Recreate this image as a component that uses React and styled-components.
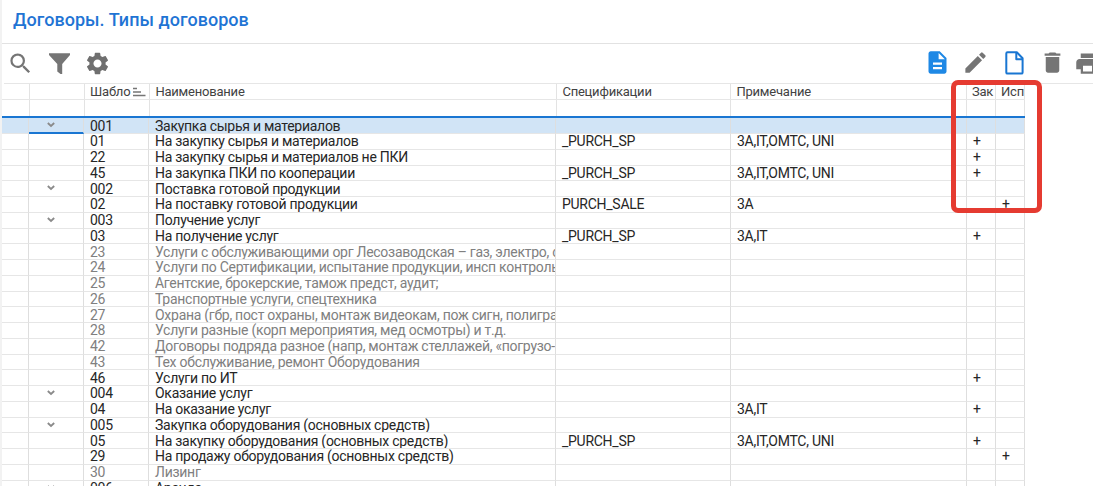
import React from "react";
import styled, { createGlobalStyle, css } from "styled-components";
import { MdSearch, MdSettings, MdEdit, MdDelete, MdPrint, MdDescription } from "react-icons/md";

const GlobalStyle = createGlobalStyle`
  * { box-sizing: border-box; }
  body { margin: 0; background: #fff; overflow: hidden; font-family: Roboto, "Liberation Sans", sans-serif; }
`;

const Page = styled.div`
  position: relative;
  width: 1093px;
  height: 486px;
  overflow: hidden;
  border-left: 2px solid #f2f2f2;
  background: #fff;
`;

const TitleBar = styled.header`
  height: 44px;
  padding: 9px 0 0 11px;
  border-bottom: 1px solid #e2e2e2;
`;

const Title = styled.h1`
  margin: 0;
  font-size: 18px;
  line-height: 22px;
  font-weight: 500;
  letter-spacing: 0.04px;
  color: #1f74d4;
  white-space: nowrap;
`;

const Toolbar = styled.div`
  display: flex;
  justify-content: space-between;
  height: 39px;
  padding: 5px 0 0 5px;
`;

const ToolGroup = styled.div`
  display: flex;
  flex: none;
  margin-right: ${(p) => p.$shift || 0}px;
`;

const Tool = styled.button`
  display: flex;
  flex: none;
  width: 27px;
  height: 27px;
  margin: ${(p) => p.$drop || 0}px ${(p) => p.$after || 0}px 0 0;
  padding: 0;
  border: 0;
  background: none;
  color: ${(p) => p.$color || "#757575"};
  svg { width: 27px; height: 27px; flex: none; }
`;

const Grid = styled.div`
  width: 1023px;
`;

const HeadRow = styled.div`
  display: flex;
  height: ${(p) => p.$h}px;
  border-bottom: ${(p) => (p.$accent ? "2px solid #1976d2" : "1px solid #e6e6e6")};
`;

const HeadTop = styled.div`
  width: 1089px;
  height: 1px;
  margin-left: 2px;
  background: #e6e6e6;
`;

const HeadCell = styled.div`
  flex: none;
  display: flex;
  width: ${(p) => p.$w}px;
  padding-left: ${(p) => (p.$wide ? 5.4 : 5)}px;
  border-right: 1px solid #e3e3e3;
  overflow: hidden;
  font-size: 13px;
  letter-spacing: -0.21px;
  line-height: 15px;
  color: #424242;
  white-space: nowrap;
`;

const Row = styled.div`
  display: flex;
  height: 15.75px;
  color: ${(p) => (p.$muted ? "#808080" : "#262626")};
  background: ${(p) => (p.$selected ? "#d1e4f6" : "#fff")};
`;

const Cell = styled.div`
  flex: none;
  width: ${(p) => p.$w}px;
  padding: 0.25px 0 0 6px;
  border-right: 1px solid #dedede;
  border-bottom: 1px solid #e6e6e6;
  overflow: hidden;
  font-size: 14px;
  letter-spacing: -0.27px;
  line-height: 15px;
  white-space: pre;
  ${(p) => p.$active && css`border-bottom: 2px solid #1976d2;`}
`;

const Chevron = styled.svg`
  display: block;
  width: 8px;
  height: 6px;
  margin: 3.75px 0 0 12px;
`;

const SortMark = styled.svg`
  flex: none;
  width: 14px;
  height: 10px;
  margin: 3px 0 0 2px;
`;

const Highlight = styled.div`
  position: absolute;
  left: 949px;
  top: 80px;
  width: 91px;
  height: 133px;
  border: 5px solid #e53b31;
  border-radius: 7px;
`;

const headWidths = [28, 55, 65, 407, 174, 236, 29, 29];
const widths = [27, 55, 65, 407, 175, 236, 29, 29];
const heads = ["", "", "Шабло", "Наименование", "Спецификации", "Примечание", "Зак", "Исп"];

const rows = [
  { g: 1, sel: 1, c: ["001", "Закупка сырья и материалов"] },
  { c: ["01", "На закупку сырья и материалов", "_PURCH_SP", "3A,IT,OMTC, UNI", "+"] },
  { c: ["22", "На закупку сырья и материалов не ПКИ", "", "", "+"] },
  { c: ["45", "На закупка ПКИ по кооперации", "_PURCH_SP", "3A,IT,OMTC, UNI", "+"] },
  { g: 1, c: ["002", "Поставка готовой продукции"] },
  { c: ["02", "На поставку готовой продукции", "PURCH_SALE", "3A", "", "+"] },
  { g: 1, c: ["003", "Получение услуг"] },
  { c: ["03", "На получение услуг", "_PURCH_SP", "3A,IT", "+"] },
  { m: 1, c: ["23", "Услуги с обслуживающими орг Лесозаводская – газ, электро, с"] },
  { m: 1, c: ["24", "Услуги по Сертификации, испытание продукции, инсп контроль"] },
  { m: 1, c: ["25", "Агентские, брокерские, тамож предст, аудит;"] },
  { m: 1, c: ["26", "Транспортные услуги, спецтехника"] },
  { m: 1, c: ["27", "Охрана (гбр, пост охраны, монтаж видеокам, пож сигн, полигра"] },
  { m: 1, c: ["28", "Услуги разные (корп мероприятия, мед осмотры) и т.д."] },
  { m: 1, c: ["42", "Договоры подряда разное (напр, монтаж стеллажей, «погрузо-"] },
  { m: 1, c: ["43", "Тех обслуживание, ремонт Оборудования"] },
  { c: ["46", "Услуги по ИТ", "", "", "+"] },
  { g: 1, c: ["004", "Оказание услуг"] },
  { c: ["04", "На оказание услуг", "", "3A,IT", "+"] },
  { g: 1, c: ["005", "Закупка оборудования (основных средств)"] },
  { c: ["05", "На закупку оборудования (основных средств)", "_PURCH_SP", "3A,IT,OMTC, UNI", "+"] },
  { c: ["29", "На продажу оборудования (основных средств)", "", "", "", "+"] },
  { m: 1, c: ["30", "Лизинг"] },
  { g: 1, c: ["006", "Аренда"] },
];

const Expand = () => (
  <Chevron viewBox="0 0 8 6">
    <path d="M0.8 1 4 4 7.2 1" fill="none" stroke="#8a8a8a" strokeWidth="1.8" />
  </Chevron>
);

const Sort = () => (
  <SortMark viewBox="0 0 14 10">
    <path d="M1 1.5h4M1 5h8M1 8.500h12.500" fill="none" stroke="#757575" strokeWidth="1.4" />
  </SortMark>
);

const Funnel = () => (
  <svg viewBox="0 0 27 27">
    <path d="M3 4.300h21v1.600l-7.800 9V25h-1.700L11.300 22.500V14.900L3 5.900z" fill="currentColor" />
  </svg>
);

const BlankFile = () => (
  <svg viewBox="0 0 27 27" fill="none" stroke="currentColor" strokeWidth="2" strokeLinejoin="round">
    <path d="M6.500 3.300h9.300l5.800 5.900V23.400a1.200 1.200 0 0 1-1.200 1.200H6.500a1.200 1.200 0 0 1-1.200-1.200V4.500a1.200 1.200 0 0 1 1.200-1.200z" />
    <path d="M15.300 3.500v6.700h6.200" />
  </svg>
);

export default function App() {
  return (
    <>
      <GlobalStyle />
      <Page>
        <TitleBar>
          <Title>Договоры. Типы договоров</Title>
        </TitleBar>
        <Toolbar>
          <ToolGroup>
            <Tool $after={12} $drop={0.5}><MdSearch /></Tool>
            <Tool $after={11.2}><Funnel /></Tool>
            <Tool $color="#6f6f6f" $drop={0.8}><MdSettings /></Tool>
          </ToolGroup>
          <ToolGroup $shift={-8.4}>
            <Tool $color="#1e88e5" $after={11}><MdDescription /></Tool>
            <Tool $after={12.4}><MdEdit /></Tool>
            <Tool $color="#1976d2" $after={11.2}><BlankFile /></Tool>
            <Tool $after={8}><MdDelete /></Tool>
            <Tool $drop={0.5}><MdPrint /></Tool>
          </ToolGroup>
        </Toolbar>
        <HeadTop />
        <Grid>
          <HeadRow $h={16}>
            {heads.map((h, i) => (
              <HeadCell key={i} $w={headWidths[i]} $wide={i > 2 && i < 6}>
                {h}
                {i === 2 && <Sort />}
              </HeadCell>
            ))}
          </HeadRow>
          <HeadRow $h={18.25} $accent>
            {heads.map((h, i) => (
              <HeadCell key={i} $w={headWidths[i]} />
            ))}
          </HeadRow>
          {rows.map((r, n) => (
            <Row key={n} $selected={r.sel} $muted={r.m}>
              <Cell $w={widths[0]} />
              <Cell $w={widths[1]} $active={r.sel}>{r.g && <Expand />}</Cell>
              {widths.slice(2).map((w, i) => (
                <Cell key={i} $w={w}>{r.c[i]}</Cell>
              ))}
            </Row>
          ))}
        </Grid>
        <Highlight />
      </Page>
    </>
  );
}
